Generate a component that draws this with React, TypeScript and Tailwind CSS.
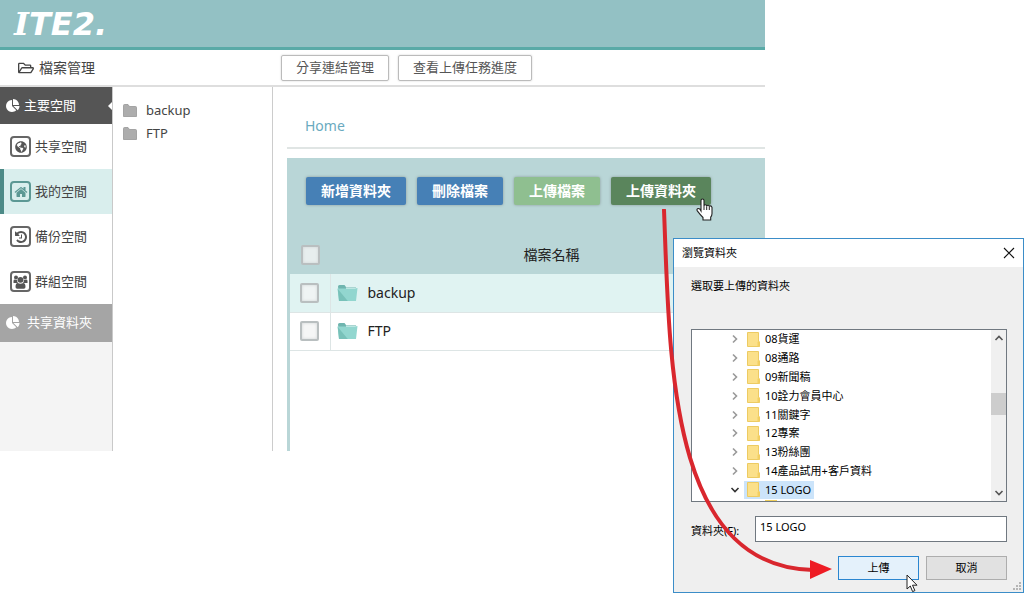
import { ReactNode } from "react";
import { FaGlobeAmericas, FaRegFolderOpen } from "react-icons/fa";

const spaces = [
  { name: "共享空間", icon: <FaGlobeAmericas className="size-3" /> },
  { name: "我的空間", icon: <HomeIcon />, active: true },
  { name: "備份空間", icon: <HistoryIcon /> },
  { name: "群組空間", icon: <GroupIcon /> },
];

const files = ["backup", "FTP"];

const folders = [
  "08貨運",
  "08通路",
  "09新聞稿",
  "10詮力會員中心",
  "11關鍵字",
  "12專案",
  "13粉絲團",
  "14產品試用+客戶資料",
  "15 LOGO",
];

function PieIcon() {
  return (
    <svg viewBox="0 0 1792 1792" fill="currentColor" className="size-3.5 shrink-0">
      <path d="M768 890l546 546q-106 108-247.500 168t-298.500 60q-209 0-385.500-103t-279.500-279.500-103-385.500 103-385.500 279.500-279.500 385.500-103v762zM955 896h773q0 157-60 298.500t-168 247.500zM1664 768h-768v-768q209 0 385.500 103t279.500 279.500 103 385.500z" />
    </svg>
  );
}

function HomeIcon() {
  return (
    <svg viewBox="0 0 1792 1792" fill="currentColor" className="size-3.5">
      <path d="M1472 992v480q0 26-19 45t-45 19h-384v-384h-256v384h-384q-26 0-45-19t-19-45v-480q0-1 .5-3t.5-3l575-474 575 474q1 2 1 6zm223-69l-62 74q-8 9-21 11h-3q-13 0-21-7l-692-577-692 577q-12 8-24 7-13-2-21-11l-62-74q-8-10-7-23.500t11-21.500l719-599q32-26 76-26t76 26l244 204v-195q0-14 9-23t23-9h192q14 0 23 9t9 23v408l219 182q10 8 11 21.500t-7 23.500z" />
    </svg>
  );
}

function HistoryIcon() {
  return (
    <svg viewBox="0 0 1792 1792" fill="currentColor" className="size-3.5">
      <path d="M1664 896q0 156-61 298t-164 245-245 164-298 61q-172 0-327-72.500t-264-204.500q-7-10-6.500-22.500t8.500-20.500l137-138q10-9 25-9 16 2 23 12 73 95 179 147t225 52q104 0 198.500-40.500t163.500-109.500 109.500-163.500 40.500-198.500-40.500-198.500-109.500-163.500-163.500-109.500-198.500-40.500q-98 0-188 35.500t-160 101.500l137 138q31 30 14 69-17 40-59 40h-448q-26 0-45-19t-19-45v-448q0-42 40-59 39-17 69 14l130 129q107-101 244.500-156.500t284.500-55.500q156 0 298 61t245 164 164 245 61 298zm-640-288v448q0 14-9 23t-23 9h-320q-14 0-23-9t-9-23v-64q0-14 9-23t23-9h224v-352q0-14 9-23t23-9h64q14 0 23 9t9 23z" />
    </svg>
  );
}

function GroupIcon() {
  return (
    <svg viewBox="0 0 15 14" fill="currentColor" className="h-3.5 w-[15px]">
      <circle cx="3" cy="2.500" r="2" />
      <circle cx="12" cy="2.500" r="2" />
      <circle cx="7.500" cy="4.800" r="2.900" />
      <path d="M.5 8V6q0-1.500 1-1.500 1.500.8 2.700.3Q4 7 5 8zM14.500 8V6q0-1.500-1-1.500-1.500.8-2.700.3Q11 7 10 8z" />
      <path d="M2.500 12q0-3.900 2.300-4 2.700 1.600 5.400 0 2.300.1 2.300 4 0 1.800-1.700 1.800H4.200Q2.500 13.800 2.500 12z" />
    </svg>
  );
}

function GrayFolder() {
  return (
    <svg viewBox="0 0 14 13" className="h-[13px] w-3.5 shrink-0">
      <path d="M.5 12.500V1.500q0-1 1-1h3.500l1.500 2h6q1 0 1 1v9z" fill="#adadad" stroke="#979797" strokeWidth=".8" />
    </svg>
  );
}

function TealFolder() {
  return (
    <svg viewBox="0 0 21 18" className="h-[18px] w-[21px] shrink-0">
      <path d="M1 2.500Q1 1 2.500 1h5l1.500 2H19v12H2.500Z" fill="#6fb5af" />
      <path d="M9 3.500h10.500l-1 8H9z" fill="#e4f6f4" />
      <path d="M.5 4.500h17.300l2.700-.5-1.500 13H2z" fill="#92d6cf" />
      <path d="M.8 5l10 12H2z" fill="#78c1b9" />
    </svg>
  );
}

function YellowFolder() {
  return (
    <svg viewBox="0 0 13 15" className="h-[15px] w-[13px] shrink-0">
      <path d="M.5.500h11v8.500l1 1v4.500H.5z" fill="#fbe08a" stroke="#edcb62" />
      <path d="M10.500 14.500V10l1-1 1 1v4.500z" fill="#f3cf62" />
    </svg>
  );
}

function Chevron({ className }: { className: string }) {
  return (
    <svg viewBox="0 0 10 10" fill="none" stroke="currentColor" className={className}>
      <path d="M3 1.500l3.500 3.500L3 8.500" strokeWidth="1.600" />
    </svg>
  );
}

const Check = ({ label }: { label: string }) => (
  <input
    type="checkbox"
    aria-label={label}
    className="block mx-auto h-5 w-[19px] appearance-none rounded-xs border-2 border-[#b9bfc0] bg-[#f3f4f4]/80 shadow-[inset_0_0_3px_#cfd3d4]"
  />
);

const ActionButton = ({ color, children }: { color: string; children: ReactNode }) => (
  <button
    className={`relative h-7 rounded-xs px-[15px] text-sm leading-5 font-bold text-white shadow-[0_0_3px_#8a9a9a] ${color}`}
  >
    {children}
  </button>
);

const Sidebar = () => (
  <nav className="flex w-[113px] shrink-0 flex-col border-r border-[#c9c9c9] bg-[#f4f4f4] text-[13px]">
    <div className="relative flex h-[37px] items-center gap-1 bg-[#555] pl-1.5 text-white">
      <PieIcon />
      主要空間
      <span className="absolute right-0 border-y-4 border-r-4 border-y-transparent border-r-white" />
    </div>
    {spaces.map((space) => (
      <a
        key={space.name}
        href="#"
        className={`flex h-[45px] items-center gap-1 border-l-4 pl-1.5 text-[#444] ${
          space.active ? "border-[#4c8a87] bg-[#d9eeed]" : "border-white bg-white"
        }`}
      >
        <span
          className={`flex size-[21px] shrink-0 items-center justify-center rounded border-2 ${
            space.active ? "border-[#5c9894] text-[#5c9894]" : "border-[#666] text-[#555]"
          }`}
        >
          {space.icon}
        </span>
        {space.name}
      </a>
    ))}
    <a href="#" className="flex h-[38px] items-center gap-[7px] bg-[#a5a5a5] pl-1.5 text-white">
      <PieIcon />
      共享資料夾
    </a>
  </nav>
);

const FileTable = () => (
  <table className="w-full text-sm text-[#222]">
    <thead>
      <tr className="h-[38px] bg-[#b9d6d7]">
        <th className="w-10 p-0">
          <Check label="全選" />
        </th>
        <th className="p-0 pl-2 font-normal">檔案名稱</th>
      </tr>
    </thead>
    <tbody>
      {files.map((file) => (
        <tr key={file} className="h-[38px] border-b border-[#dde5e5] odd:bg-[#e0f3f2]">
          <td className="border-r border-[#dde5e5] p-0">
            <Check label={file} />
          </td>
          <td className="p-0 pl-1.5">
            <span className="flex items-center gap-2.5">
              <TealFolder />
              {file}
            </span>
          </td>
        </tr>
      ))}
    </tbody>
  </table>
);

const FileManager = () => (
  <div className="flex min-h-[76vh] w-[74.7%] flex-col bg-white">
    <header className="flex h-[50px] items-center border-b-3 border-[#59aaa7] bg-[#93c1c4] pl-3.5">
      <h1 className="font-['DejaVu_Sans'] text-[32px] leading-8 font-bold text-white italic">
        <span className="font-['DejaVu_Serif']">I</span>TE2.
      </h1>
    </header>

    <div className="flex h-[37px] shrink-0 items-center border-b-2 border-[#dedede] text-[13px] text-[#555]">
      <div className="flex w-[281px] items-center gap-[5px] pl-[18px] text-sm text-[#444]">
        <FaRegFolderOpen className="size-4" />
        檔案管理
      </div>
      <div className="flex gap-[9px]">
        <button className="h-[26px] rounded-xs border border-[#bbb] px-3.5 shadow-[0_0_2px_#ccc]">
          分享連結管理
        </button>
        <button className="h-[26px] rounded-xs border border-[#bbb] px-3.5 shadow-[0_0_2px_#ccc]">
          查看上傳任務進度
        </button>
      </div>
    </div>

    <div className="flex grow">
      <Sidebar />
      <ul className="w-40 shrink-0 border-r border-[#ccc] pt-3 pl-2.5 text-[13px] text-[#444]">
        {files.map((file) => (
          <li key={file}>
            <a href="#" className="flex h-[23px] items-center gap-[9px]">
              <GrayFolder />
              {file}
            </a>
          </li>
        ))}
      </ul>

      <main className="flex grow flex-col pl-3.5">
        <div className="border-b-2 border-[#e0e5e4] pt-[29px] pb-[11px] pl-[18px] text-sm leading-5 text-[#6aaac0]">
          <a href="#">Home</a>
        </div>
        <section className="mt-[9px] flex grow flex-col border-l-3 border-[#b9d6d7]">
          <div className="flex gap-[11px] bg-[#b9d6d7] pt-[19px] pb-[31px] pl-4">
            <ActionButton color="bg-[#4680b6]">新增資料夾</ActionButton>
            <ActionButton color="bg-[#4680b6]">刪除檔案</ActionButton>
            <ActionButton color="bg-[#8fbf90]">上傳檔案</ActionButton>
            <ActionButton color="bg-[#5a855c]">
              上傳資料夾
              <HandCursor />
            </ActionButton>
          </div>
          <FileTable />
        </section>
      </main>
    </div>
  </div>
);

function HandCursor() {
  return (
    <svg viewBox="0 0 17 23" className="absolute top-[21px] -right-0.5 h-[23px] w-[17px]">
      <path
        d="M5 13V2.500Q5 1 6.500 1T8 2.500V8q0-1.200 1.300-1.200T10.700 8.300q0-1 1.300-1t1.300 1.400q.2-.8 1.200-.8T16 9.500v6q0 2-1.300 3.700V22H7v-2.500Q4.500 17 1.300 12.800q-.8-1.300.2-2T3.800 11z"
        fill="#fff"
        stroke="#222"
        strokeWidth="1.100"
      />
      <path d="M8 8v4M10.700 8.300V12M13.300 8.700V12" stroke="#222" />
    </svg>
  );
}

const BrowseDialog = () => (
  <div
    role="dialog"
    aria-label="瀏覽資料夾"
    className="absolute right-0 bottom-0 w-[351px] border border-[#3b8dc8] bg-[#efefef] text-[11px] leading-4 text-black"
  >
    <div className="flex h-7 items-center justify-between bg-white px-2">
      <span>瀏覽資料夾</span>
      <button aria-label="關閉">
        <svg viewBox="0 0 12 12" className="size-3" stroke="#111" strokeWidth="1.100">
          <path d="M1 1l10 10M11 1L1 11" />
        </svg>
      </button>
    </div>

    <div className="pt-[11px] pr-4 pb-3 pl-[17px]">
      <p>選取要上傳的資料夾</p>

      <div className="mt-[35px] flex h-[173px] border border-[#707880] bg-white">
        <div className="grow overflow-hidden">
          <ul className="flex h-[169px] flex-col">
            {folders.map((folder) => {
              const open = folder === "15 LOGO";
              return (
                <li key={folder} className="flex flex-1 items-center gap-1 pl-[38px]">
                  <Chevron className={open ? "size-2.5 rotate-90 text-[#333]" : "size-2.5 text-[#999]"} />
                  <span className={`flex items-center gap-[5px] px-[3px] ${open ? "bg-[#cce4fa]" : ""}`}>
                    <YellowFolder />
                    <span className="leading-[18px]">{folder}</span>
                  </span>
                </li>
              );
            })}
          </ul>
          <div className="mt-px ml-[73px] h-px w-3 bg-[#f0cf5c]" />
        </div>
        {/* scrollbar */}
        <div className="flex w-[15px] flex-col items-center bg-[#f0f0f0] py-[3px] text-[#555]">
          <Chevron className="size-2.5 -rotate-90" />
          <div className="mt-[50px] h-[22px] w-full bg-[#cdcdcd]" />
          <Chevron className="mt-auto size-2.5 rotate-90" />
        </div>
      </div>

      <div className="mt-3.5 flex">
        <label htmlFor="folder" className="w-16 pt-[7px]">
          資料夾(F):
        </label>
        <input
          id="folder"
          defaultValue="15 LOGO"
          className="h-[26px] min-w-0 grow border border-[#707880] bg-white pb-1.5 pl-1 outline-none"
        />
      </div>

      <div className="mt-3.5 flex justify-end gap-[7px]">
        <button className="relative h-6 w-[81px] border border-[#2a86d0] bg-[#e4f1fb]">
          上傳
          <svg viewBox="0 0 12 19" className="absolute top-[17px] right-0 h-[19px] w-3">
            <path
              d="M1 1v14l3.300-3 2.300 5.600 2.300-1-2.400-5.400H11z"
              fill="#fff"
              stroke="#222"
            />
          </svg>
        </button>
        <button className="h-6 w-[81px] border border-[#adadad] bg-[#e1e1e1]">取消</button>
      </div>
    </div>

    <svg viewBox="0 0 8 8" className="absolute right-0.5 bottom-0.5 size-2" fill="#b5b5b5">
      <path d="M6 0h2v2H6zM3 3h2v2H3zM6 3h2v2H6zM0 6h2v2H0zM3 6h2v2H3zM6 6h2v2H6z" />
    </svg>

    {/* arrow from the upload button to the confirm button */}
    <svg viewBox="0 0 180 376" className="pointer-events-none absolute bottom-[7px] -left-4 h-[376px] w-[180px]">
      <path d="M6 1C12 150 10 358 155 361" fill="none" stroke="#d9272e" strokeWidth="4" strokeLinecap="round" />
      <path d="M152 351l22 9-22 10z" fill="#ee1c24" />
    </svg>
  </div>
);

export default function App() {
  return (
    <div className="relative min-h-screen overflow-hidden bg-white font-['Noto_Sans','Noto_Sans_CJK_TC',sans-serif]">
      <FileManager />
      <BrowseDialog />
    </div>
  );
}
